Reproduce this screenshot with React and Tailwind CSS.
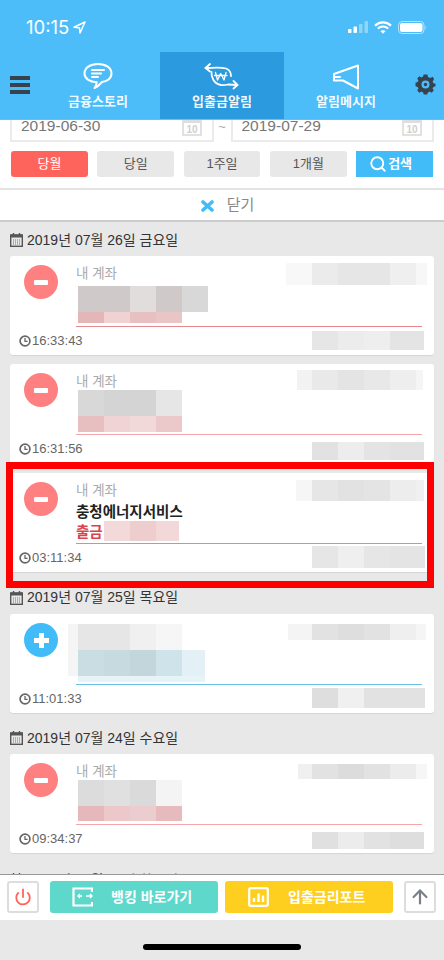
import { Power, ArrowUp, Search } from 'lucide-react'

const days = [
  {
    date: '2019년 07월 26일 금요일',
    headClass: 'h-[34px] pt-[2px]',
    items: [
      {
        type: 'out',
        time: '16:33:43',
        cardClass: 'h-[99px]',
        mosaics: [
          { x: 68, y: 30, h: 26, tiles: [[26, '#cfc9ca'], [26, '#cfc9ca'], [26, '#e2dddd'], [26, '#cfc9ca'], [26, '#d8d8d8']] },
          { x: 68, y: 56, h: 11, tiles: [[26, '#e4b6b8'], [26, '#f0d2d3'], [26, '#e9c0c2'], [26, '#eac5c6']] },
          { x: 276, y: 7, h: 22, tiles: [[26, '#f8f8f8'], [26, '#ebebeb'], [26, '#e6e6e6'], [26, '#e6e6e6'], [26, '#efefef'], [11, '#f7f7f7']] },
          { x: 302, y: 75, h: 19, tiles: [[26, '#e6e6e6'], [26, '#ececec'], [26, '#eeeeee'], [34, '#e4e4e4']] },
        ],
      },
      {
        type: 'out',
        time: '16:31:56',
        cardClass: 'h-[100px]',
        lineClass: 'border-[#f5a6ab]',
        mosaics: [
          { x: 68, y: 26, h: 26, tiles: [[26, '#d8d8d8'], [26, '#d4d4d4'], [26, '#d4d4d4'], [26, '#e6e6e6']] },
          { x: 68, y: 52, h: 16, tiles: [[26, '#e8bfc1'], [26, '#f0d4d5'], [26, '#f1d8d9'], [26, '#ebc8c9']] },
          { x: 287, y: 6, h: 20, tiles: [[15, '#f2f2f2'], [26, '#e9e9e9'], [26, '#e4e4e4'], [26, '#e8e8e8'], [26, '#eeeeee'], [7, '#f5f5f5']] },
          { x: 302, y: 78, h: 18, tiles: [[26, '#e2e2e2'], [26, '#ededed'], [26, '#e4e4e4'], [34, '#e2e2e2']] },
        ],
      },
      {
        type: 'out',
        time: '03:11:34',
        cardClass: 'h-[99px]',
        name: '충청에너지서비스',
        sub: '출금',
        mosaics: [
          { x: 94, y: 48, h: 20, tiles: [[26, '#f3d9da'], [26, '#eecdce'], [23, '#f2d8d9']] },
          { x: 286, y: 7, h: 21, tiles: [[16, '#f6f6f6'], [26, '#e6e6e6'], [26, '#e2e2e2'], [26, '#e4e4e4'], [26, '#ededed'], [8, '#f0f0f0']] },
          { x: 302, y: 73, h: 22, tiles: [[26, '#e6e6e6'], [26, '#efefef'], [26, '#e6e6e6'], [35, '#e4e4e4']] },
        ],
      },
    ],
  },
  {
    date: '2019년 07월 25일 목요일',
    headClass: 'h-[33px]',
    items: [
      {
        type: 'in',
        time: '11:01:33',
        cardClass: 'h-[99px]',
        hideLabel: true,
        mosaics: [
          { x: 58, y: 10, h: 52, tiles: [[10, '#f5f5f5']] },
          { x: 68, y: 10, h: 26, tiles: [[26, '#e6e6e6'], [26, '#e6e6e6'], [26, '#f0f0f0'], [26, '#f6f6f6']] },
          { x: 68, y: 36, h: 26, tiles: [[26, '#c9dde3'], [26, '#c6dae0'], [26, '#c3d6dc'], [26, '#cfe3eb'], [23, '#e3f1f6']] },
          { x: 68, y: 62, h: 6, tiles: [[127, '#e6f3f7']] },
          { x: 278, y: 10, h: 16, tiles: [[24, '#f4f4f4'], [26, '#e2e2e2'], [26, '#dedede'], [26, '#e2e2e2'], [26, '#efefef'], [10, '#f5f5f5']] },
          { x: 302, y: 74, h: 20, tiles: [[26, '#dedede'], [26, '#f0f0f0'], [26, '#e2e2e2'], [35, '#e2e2e2']] },
        ],
      },
    ],
  },
  {
    date: '2019년 07월 24일 수요일',
    headClass: 'h-[32px]',
    items: [
      {
        type: 'out',
        time: '09:34:37',
        cardClass: 'h-[99px]',
        lineClass: 'border-[#f5a6ab]',
        mosaics: [
          { x: 68, y: 26, h: 26, tiles: [[26, '#dcdcdc'], [26, '#e0e0e0'], [26, '#dadada'], [26, '#f4f4f4']] },
          { x: 68, y: 52, h: 15, tiles: [[26, '#e6b8bb'], [26, '#ecc8ca'], [26, '#eccdcf'], [26, '#e7bbbe']] },
          { x: 288, y: 10, h: 15, tiles: [[14, '#f0f0f0'], [26, '#e2e2e2'], [26, '#dcdcdc'], [26, '#e2e2e2'], [26, '#ececec'], [11, '#f6f6f6']] },
          { x: 302, y: 78, h: 17, tiles: [[26, '#e0e0e0'], [26, '#ececec'], [26, '#e2e2e2'], [34, '#dedede']] },
        ],
      },
    ],
  },
  { date: '2019년 07월 23일 화요일', headClass: 'h-[36px]', items: [] },
]

function StatusBar() {
  return (
    <div className="flex h-[52px] items-center justify-between pl-[26px] pr-[17px] pt-[2px] text-white">
      <div className="flex items-center gap-[4px]">
        <span className="font-['Inter',sans-serif] text-[18.5px] leading-none">10:15</span>
        <svg width="13" height="13" viewBox="0 0 13 13" fill="none" stroke="white" strokeWidth="1.5" strokeLinejoin="round">
          <path d="M12 1 L1 6.2 L6.4 6.8 L7 12 Z" />
        </svg>
      </div>
      <div className="flex items-center gap-[6px]">
        <svg width="20" height="12" viewBox="0 0 20 12">
          <rect x="0" y="8" width="3.5" height="4" rx="0.8" fill="white" />
          <rect x="5.5" y="5.5" width="3.5" height="6.5" rx="0.8" fill="white" />
          <rect x="11" y="3" width="3.5" height="9" rx="0.8" fill="#8fd6fb" />
          <rect x="16.5" y="0" width="3.5" height="12" rx="0.8" fill="#8fd6fb" />
        </svg>
        <svg width="18" height="13" viewBox="0 0 18 13" fill="none" stroke="white" strokeWidth="2.2" strokeLinecap="butt">
          <path d="M1 4.6 C5.8 0.4 12.2 0.4 17 4.6" />
          <path d="M3.8 7.5 C6.9 4.8 11.1 4.8 14.2 7.5" />
          <path d="M9 12.8 L6.4 10.1 C7.9 8.9 10.1 8.9 11.6 10.1 Z" fill="white" stroke="none" />
        </svg>
        <svg width="29" height="13" viewBox="0 0 29 13" fill="none">
          <rect x="0.5" y="0.5" width="25.5" height="12" rx="3.5" stroke="#b4e3fc" />
          <rect x="2" y="2" width="22.5" height="9" rx="2" fill="white" />
          <path d="M27.5 4.5 C28.4 5 28.6 8 27.5 8.5 Z" fill="#b4e3fc" />
        </svg>
      </div>
    </div>
  )
}

function NavTab({ label, active, children }) {
  return (
    <div className={`flex w-[124px] flex-col items-center ${active ? 'bg-[#2c9ade]' : ''}`}>
      <div className="flex h-[38px] items-end justify-center">{children}</div>
      <span className="mt-[3px] text-[13px] font-bold leading-[18px] text-white/95">{label}</span>
    </div>
  )
}

function NavBar() {
  return (
    <div className="flex h-[68px] items-stretch border-b border-[#5cc4fa]">
      <div className="flex w-[36px] flex-col justify-center gap-[3px] pb-[2px] pl-[10px]">
        <span className="h-[4px] w-[20px] bg-[#37424f]" />
        <span className="h-[4px] w-[20px] bg-[#37424f]" />
        <span className="h-[4px] w-[20px] bg-[#37424f]" />
      </div>
      <NavTab label="금융스토리">
        <svg width="30" height="28" viewBox="0 0 30 28" fill="none" stroke="white" strokeWidth="2" strokeLinecap="round" strokeLinejoin="round">
          <path d="M15 2 C23 2 28.5 6 28.5 11.5 C28.5 16.5 24 19.5 19 20 C16.5 23 14 25 11.5 26 C13 24 13.6 22 13.8 20.2 C6.5 20 1.5 16.5 1.5 11.5 C1.5 6 7 2 15 2 Z" />
          <path d="M9 8 H21 M9 11.5 H18 M9 15 H15" />
        </svg>
      </NavTab>
      <NavTab label="입출금알림" active>
        <svg width="36" height="28" viewBox="0 0 36 28" fill="none" stroke="white" strokeWidth="1.8" strokeLinecap="round" strokeLinejoin="round">
          <path d="M1.5 6 C9 6 16 5 22 6.5 C26 8 27 11 27 14" />
          <path d="M6 2 L1.5 6 L6 9.5" />
          <path d="M7.5 10 C7 15 10 22 17 23 C20 23.3 22 23 24 22.5 L33.5 23" />
          <path d="M29.5 19 L33.5 23 L29.5 26.5" />
          <path d="M11.5 10.5 L13.5 18 L16.7 11.5 L20 18 L22 10.5 M10.5 13.5 H23" strokeWidth="1.3" />
        </svg>
      </NavTab>
      <NavTab label="알림메시지">
        <svg width="28" height="26" viewBox="0 0 28 26" fill="none" stroke="white" strokeWidth="2" strokeLinecap="round" strokeLinejoin="round">
          <path d="M26 1.5 V24.5 L11 16.5 H2 V10 L26 1.5 Z" />
          <path d="M2 13 H8" />
        </svg>
      </NavTab>
      <div className="flex flex-1 items-center justify-center pb-[2px] pr-[2px]">
        <svg width="21" height="21" viewBox="0 0 21 21">
          <path
            fill="#37424f"
            d="M8.6 0.5 H12.4 L13 3 L15.3 4 L17.5 2.7 L18.3 3.5 L19 5.5 L17.6 7.6 L18.4 9.2 L20.5 9.8 V12.2 L18.4 12.9 L17.6 14.6 L18.8 16.6 L16.6 18.8 L14.6 17.6 L12.9 18.4 L12.2 20.5 H8.8 L8.1 18.4 L6.4 17.6 L4.4 18.8 L2.2 16.6 L3.4 14.6 L2.6 12.9 L0.5 12.2 V8.8 L2.6 8.1 L3.4 6.4 L2.2 4.4 L4.4 2.2 L6.4 3.4 L8.1 2.6 Z"
          />
          <circle cx="10.5" cy="10.5" r="4" fill="#4fbcf7" />
          <circle cx="10.5" cy="10.5" r="1.7" fill="#37424f" />
        </svg>
      </div>
    </div>
  )
}

function CalIcon() {
  return (
    <svg width="20" height="16" viewBox="0 0 20 16" fill="none" className="absolute right-[10px] top-0">
      <path d="M1 0 V15 H19 V0" stroke="#d8d8d8" strokeWidth="1.5" />
      <rect x="1" y="0" width="18" height="3" fill="#dedede" />
      <text x="10" y="13" textAnchor="middle" fontSize="10" fontWeight="700" fill="#cfcfcf">10</text>
    </svg>
  )
}

function DateBox({ value }) {
  return (
    <div className="relative h-[22px] flex-1 border-x-2 border-b-2 border-[#ebebeb] pl-[9px] text-[15.5px] leading-[11px] text-[#777777]">
      {value}
      <CalIcon />
    </div>
  )
}

function Filter() {
  const ranges = ['당일', '1주일', '1개월']
  return (
    <div className="bg-white">
      <div className="flex items-start px-[10px]">
        <DateBox value="2019-06-30" />
        <span className="w-[17px] text-center text-[13px] leading-[14px] text-[#aaaaaa]">~</span>
        <DateBox value="2019-07-29" />
      </div>
      <div className="mt-[9px] flex h-[26px] gap-[9.5px] pl-[11px] pr-[11px] text-[13px]">
        <div className="flex flex-1 items-center justify-center rounded-[3px] bg-[#ff645c] text-white">당월</div>
        {ranges.map((r) => (
          <div key={r} className="flex flex-1 items-center justify-center rounded-[3px] bg-[#e8e8e8] text-[#555555]">{r}</div>
        ))}
        <div className="flex flex-1 items-center justify-center bg-[#42bcf8] font-bold text-white">
          <div className="mr-[8px] flex items-center gap-[1px]">
            <Search size={18} strokeWidth={2.5} />
            <span>검색</span>
          </div>
        </div>
      </div>
      <div className="mt-[11px] flex h-[34px] items-center justify-center gap-[13px] border-y-2 border-t-[#e4e4e4] border-b-[#cccccc] pl-[11px] pt-[1px] text-[15px] text-[#888888]">
        <svg width="13" height="12" viewBox="0 0 13 12">
          <path d="M2 2 L11 10 M11 2 L2 10" stroke="#42bcf8" strokeWidth="3.6" strokeLinecap="round" />
        </svg>
        <span>닫기</span>
      </div>
    </div>
  )
}

function Mosaic({ x, y, h, tiles }) {
  return (
    <div className="absolute flex" style={{ left: x, top: y, height: h }}>
      {tiles.map(([w, color], i) => (
        <span key={i} style={{ width: w, backgroundColor: color }} />
      ))}
    </div>
  )
}

function ClockIcon() {
  return (
    <svg width="12" height="12" viewBox="0 0 12 12" fill="none" stroke="#666666" strokeWidth="1.7">
      <circle cx="6" cy="6" r="4.9" />
      <path d="M6 3 V6.3 H8.6" strokeWidth="1.3" />
    </svg>
  )
}

function Card({ item }) {
  const out = item.type === 'out'
  const line = item.lineClass || (out ? 'border-[#e8868d]' : 'border-[#6cc0e8]')
  return (
    <div className={`relative mx-[10px] mb-[9px] rounded-[3px] bg-white shadow-[0_1px_1px_rgba(0,0,0,0.08)] ${item.cardClass}`}>
      <div className="flex pl-[14px] pt-[9px]">
        <div className={`flex h-[34px] w-[34px] items-center justify-center rounded-full ${out ? 'bg-[#ff8080]' : 'bg-[#42bcf8]'}`}>
          {out ? (
            <span className="h-[5px] w-[14px] rounded-[1px] bg-white" />
          ) : (
            <svg width="15" height="15" viewBox="0 0 15 15">
              <path d="M5 0 H10 V5 H15 V10 H10 V15 H5 V10 H0 V5 H5 Z" fill="white" />
            </svg>
          )}
        </div>
        <div className={`ml-[18px] h-[62px] w-[346px] border-b-[1.5px] ${line}`}>
          {!item.hideLabel && <div className="text-[13.5px] leading-[18px] text-[#aaaaaa]">내 계좌</div>}
          {item.name && <div className="mt-[2px] text-[14.5px] font-bold leading-[20px] text-[#222222]">{item.name}</div>}
          {item.sub && <div className="text-[14.5px] font-bold leading-[20px] text-[#d9434e]">{item.sub}</div>}
        </div>
      </div>
      <div className="flex h-[28px] items-center gap-[1px] pl-[9px] text-[13px] text-[#666666]">
        <ClockIcon />
        <span>{item.time}</span>
      </div>
      {item.mosaics.map((m, i) => (
        <Mosaic key={i} {...m} />
      ))}
    </div>
  )
}

function DayHead({ date, className }) {
  return (
    <div className={`flex items-center gap-[4px] pl-[10px] text-[14px] text-[#333333] ${className}`}>
      <svg width="13" height="14" viewBox="0 0 13 14" fill="none">
        <rect x="0.7" y="2" width="11.6" height="11.3" stroke="#555555" strokeWidth="1.4" />
        <rect x="0.7" y="1.5" width="11.6" height="3" fill="#555555" />
        <path d="M3.5 0 V2 M9.5 0 V2" stroke="#555555" strokeWidth="1.4" />
        <path d="M3 7 H10 M3 9 H10 M3 11 H10" stroke="#777777" strokeWidth="1" strokeDasharray="1 1" />
      </svg>
      <span>{date}</span>
    </div>
  )
}

function Footer() {
  return (
    <div className="flex h-[46px] items-center border-t border-[#999999] bg-white pb-[1px]">
      <button className="ml-[7px] flex h-[32px] w-[32px] items-center justify-center rounded-[3px] border-2 border-[#dddddd] text-[#ff645c]">
        <Power size={18} strokeWidth={2.4} />
      </button>
      <button className="ml-[11px] flex h-[32px] w-[168px] items-center rounded-[3px] bg-[#5dd8cb] pl-[22px] text-[14px] font-bold text-white">
        <svg width="21" height="20" viewBox="0 0 21 20" fill="none" stroke="white" strokeWidth="2.2">
          <path d="M20 5 V1.5 H1.5 V18.5 H20 V15" />
          <path d="M6 9 H10 M14 9 H20" strokeWidth="1.6" />
          <path d="M8 7 L6 9 L8 11 M18 7 L20 9 L18 11" strokeWidth="1.4" />
        </svg>
        <span className="ml-[18px]">뱅킹 바로가기</span>
      </button>
      <button className="ml-[7px] flex h-[32px] w-[168px] items-center rounded-[3px] bg-[#ffcf1f] pl-[23px] text-[14px] font-bold text-white">
        <svg width="21" height="20" viewBox="0 0 21 20" fill="none">
          <rect x="1.2" y="1.2" width="18.6" height="17.6" rx="1.5" stroke="white" strokeWidth="2.2" />
          <path d="M6 15 V11 M10.5 15 V6.5 M15 15 V8.5" stroke="white" strokeWidth="2.4" />
        </svg>
        <span className="ml-[19px]">입출금리포트</span>
      </button>
      <button className="ml-[11px] flex h-[32px] w-[32px] items-center justify-center rounded-[3px] border-2 border-[#dddddd] text-[#7a8086]">
        <ArrowUp size={22} strokeWidth={2.4} />
      </button>
    </div>
  )
}

export default function App() {
  return (
    <div className="flex h-[960px] w-[444px] flex-col overflow-hidden bg-[#e8e8e8] font-['Liberation_Sans','Noto_Sans_CJK_KR',sans-serif]">
      <div className="bg-[#4dbdf9]">
        <StatusBar />
        <NavBar />
      </div>
      <Filter />
      <div className="relative min-h-0 flex-1 overflow-hidden">
        {days.map((d) => (
          <div key={d.date}>
            <DayHead date={d.date} className={d.headClass} />
            {d.items.map((item) => (
              <Card key={item.time} item={item} />
            ))}
          </div>
        ))}
        <div className="absolute left-[6px] top-[240px] h-[126px] w-[428px] border-[7px] border-[#ff0000]" />
      </div>
      <Footer />
      <div className="flex h-[40px] items-start justify-center pt-[24px]">
        <span className="h-[6px] w-[158px] rounded-full bg-black" />
      </div>
    </div>
  )
}
